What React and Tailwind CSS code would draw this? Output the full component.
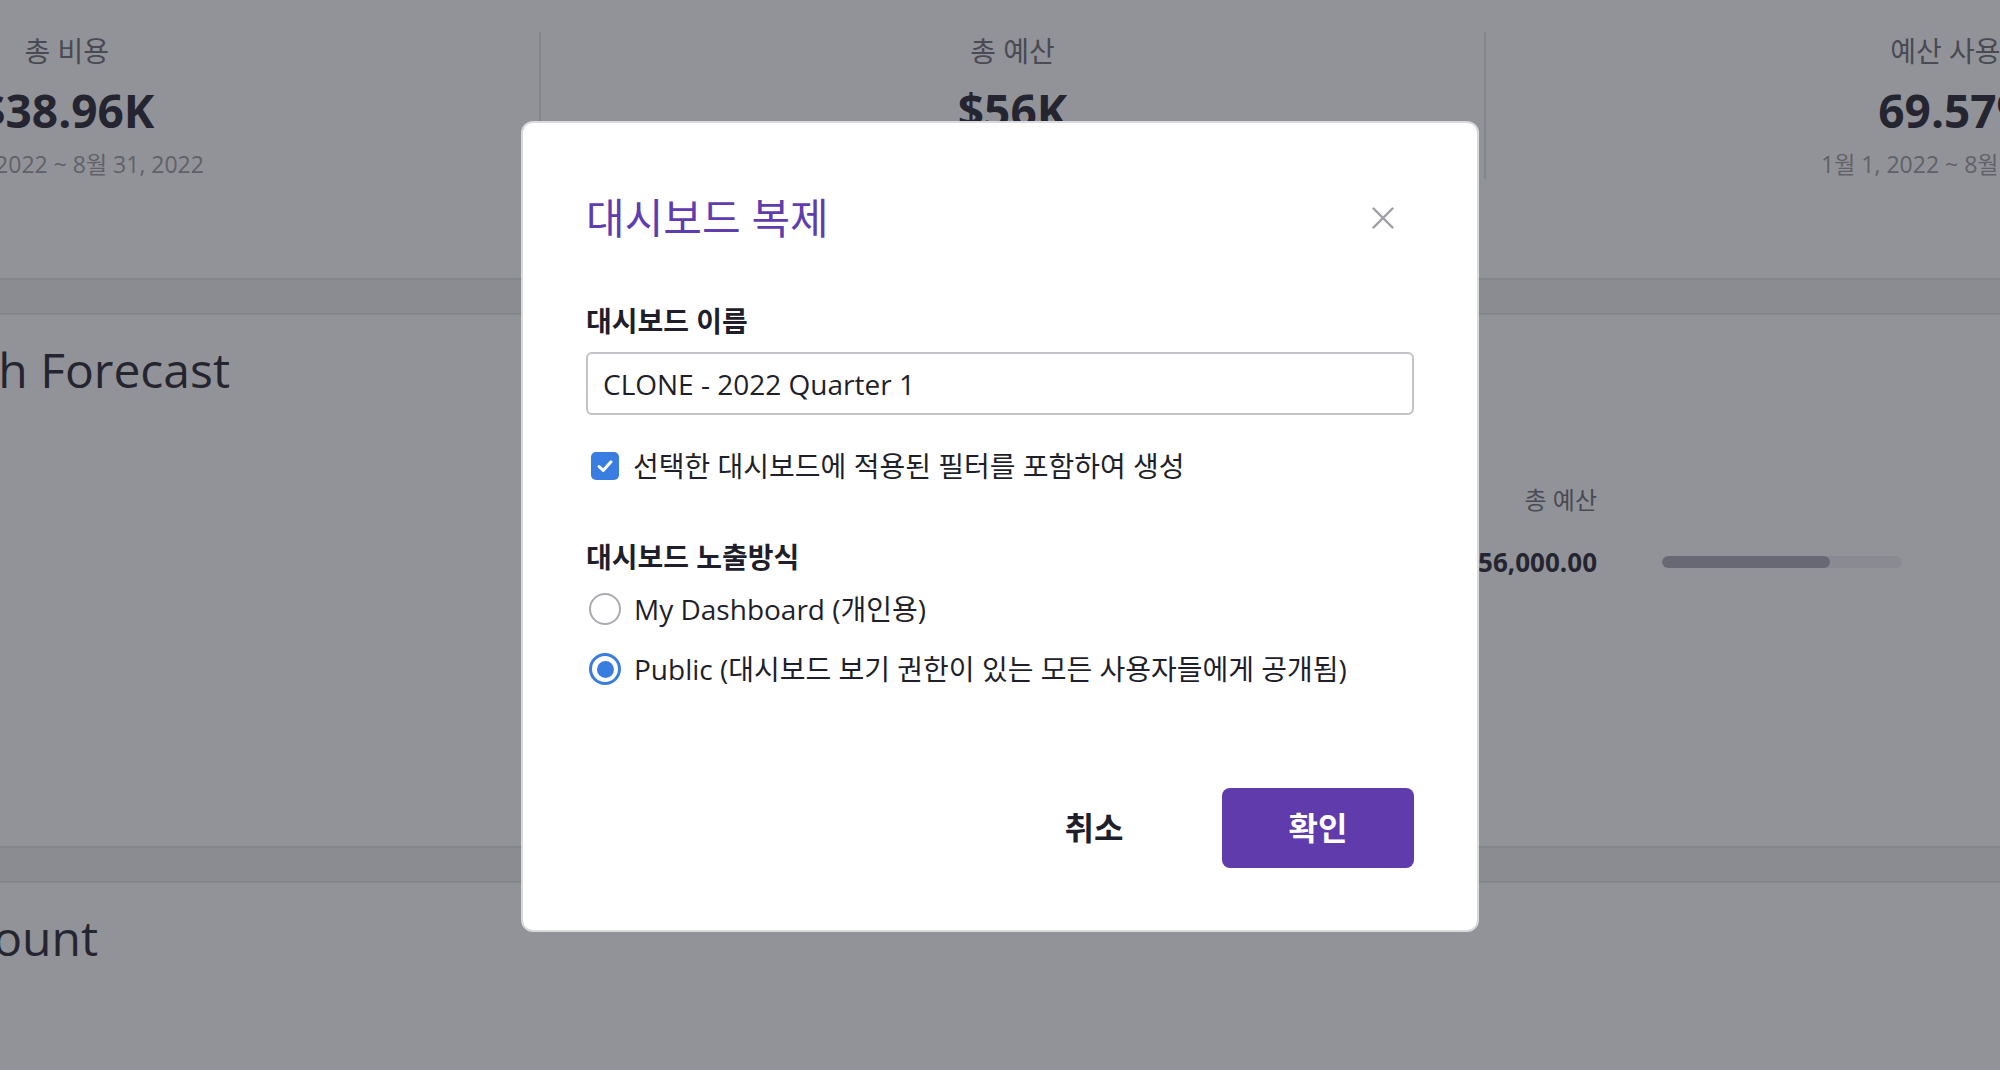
import React from "react";

const Stat = ({ label, value, period, divider }) => (
  <div
    className={`flex-1 h-[147px] flex flex-col items-center ${
      divider ? "border-l-2 border-[#e1e2e6]" : ""
    }`}
  >
    <div className="text-[28px] leading-[38px] text-[#6c6c76]">{label}</div>
    <div className="mt-[10px] text-[46px] leading-[60px] font-bold text-[#23232e]">
      {value}
    </div>
    <div className="mt-[8px] text-[23px] leading-[32px] text-[#9a9aa2]">
      {period}
    </div>
  </div>
);

const Dashboard = () => (
  <div className="ml-[-405px] w-[2835px] flex flex-col gap-[33px]">
    <section className="h-[280px] bg-white border-b-2 border-[#e3e4e8] flex pt-[32px]">
      <Stat label="총 비용" value="$38.96K" period="1월 1, 2022 ~ 8월 31, 2022" />
      <Stat label="총 예산" value="$56K" period="1월 1, 2022 ~ 12월 31, 2022" divider />
      <Stat label="예산 사용률" value="69.57%" period="1월 1, 2022 ~ 8월 31, 2022" divider />
    </section>

    <section className="h-[535px] bg-white border-y-2 border-[#e3e4e8] flex items-start">
      <div className="w-[635px] pt-[23px] flex justify-end overflow-hidden whitespace-nowrap">
        <h2 className="text-[48px] leading-[64px] text-[#23232e]">
          Budget vs Cost Month Forecast
        </h2>
      </div>
      <div className="ml-[1167px] mt-[170px] grid grid-cols-[200px_240px] gap-x-[65px] gap-y-[29px] items-center">
        <div className="text-right text-[24px] leading-[30px] text-[#6c6c76]">총 예산</div>
        <div />
        <div className="text-right text-[26px] leading-[36px] font-bold text-[#23232e]">
          $56,000.00
        </div>
        <div className="h-[12px] rounded-full bg-[#eeeff2] overflow-hidden">
          <div className="h-full w-[70%] rounded-full bg-[#a9a8b5]" />
        </div>
      </div>
    </section>

    <section className="h-[400px] bg-white border-t-2 border-[#e3e4e8] flex">
      <div className="w-[503px] pt-[23px] flex justify-end overflow-hidden whitespace-nowrap">
        <h2 className="text-[48px] leading-[64px] text-[#23232e]">Cost by Account</h2>
      </div>
    </section>
  </div>
);

const CloseIcon = () => (
  <svg width="22" height="22" viewBox="0 0 22 22" fill="none">
    <path d="M1.5 1.5 L20.5 20.5 M20.5 1.5 L1.5 20.5" stroke="#9d9da5" strokeWidth="2.4" strokeLinecap="round" />
  </svg>
);

const Checkbox = () => (
  <span className="ml-[5px] w-[28px] h-[28px] shrink-0 rounded-[5px] bg-[#3a7de0] flex items-center justify-center">
    <svg width="20" height="20" viewBox="0 0 20 20" fill="none">
      <path d="M4 10.5 L8.2 14.5 L16 5.8" stroke="white" strokeWidth="3" strokeLinecap="round" strokeLinejoin="round" />
    </svg>
  </span>
);

const Radio = ({ checked }) =>
  checked ? (
    <span className="ml-[3px] w-[32px] h-[32px] shrink-0 rounded-full border-[3px] border-[#3a7de0] flex items-center justify-center">
      <span className="w-[17px] h-[17px] rounded-full bg-[#3a7de0]" />
    </span>
  ) : (
    <span className="ml-[3px] w-[32px] h-[32px] shrink-0 rounded-full border-2 border-[#aaaab0] bg-white" />
  );

const DuplicateModal = () => (
  <div className="w-[958px] h-[811px] bg-white rounded-[12px] border-2 border-[#d9d9de] pl-[63px] pr-[63px] pt-[69px] text-[#1f1f2b]">
    <div className="h-[52px] flex items-center justify-between">
      <h1 className="text-[42px] leading-[52px] text-[#5f3dae]">대시보드 복제</h1>
      <button className="mr-[20px]">
        <CloseIcon />
      </button>
    </div>

    <div className="mt-[57px] text-[28px] leading-[40px] font-bold">대시보드 이름</div>
    <input
      readOnly
      value="CLONE - 2022 Quarter 1"
      className="mt-[11px] w-full h-[63px] border-2 border-[#c2c2c7] rounded-[6px] px-[15px] text-[28px] text-[#1f1f2b] outline-none"
    />

    <div className="mt-[31px] h-[40px] flex items-center gap-[14px]">
      <Checkbox />
      <span className="text-[28px]">선택한 대시보드에 적용된 필터를 포함하여 생성</span>
    </div>

    <div className="mt-[51px] text-[28px] leading-[40px] font-bold">대시보드 노출방식</div>
    <div className="mt-[12px] h-[40px] flex items-center gap-[13px]">
      <Radio />
      <span className="text-[28px]">My Dashboard (개인용)</span>
    </div>
    <div className="mt-[20px] h-[40px] flex items-center gap-[13px]">
      <Radio checked />
      <span className="text-[28px]">Public (대시보드 보기 권한이 있는 모든 사용자들에게 공개됨)</span>
    </div>

    <div className="mt-[99px] flex justify-end gap-[32px]">
      <button className="w-[192px] h-[80px] text-[32px] font-bold text-[#1f1f2b]">취소</button>
      <button className="w-[192px] h-[80px] rounded-[8px] bg-[#5f3bab] text-[32px] font-bold text-white">
        확인
      </button>
    </div>
  </div>
);

export default function App() {
  return (
    <div className="relative h-[1070px] w-full overflow-hidden bg-[#f0f1f3] font-['Open_Sans','Noto_Sans_CJK_KR',sans-serif]">
      <Dashboard />
      <div className="fixed inset-0 bg-[rgba(38,39,50,0.5)] flex justify-center items-start pt-[121px]">
        <DuplicateModal />
      </div>
    </div>
  );
}
